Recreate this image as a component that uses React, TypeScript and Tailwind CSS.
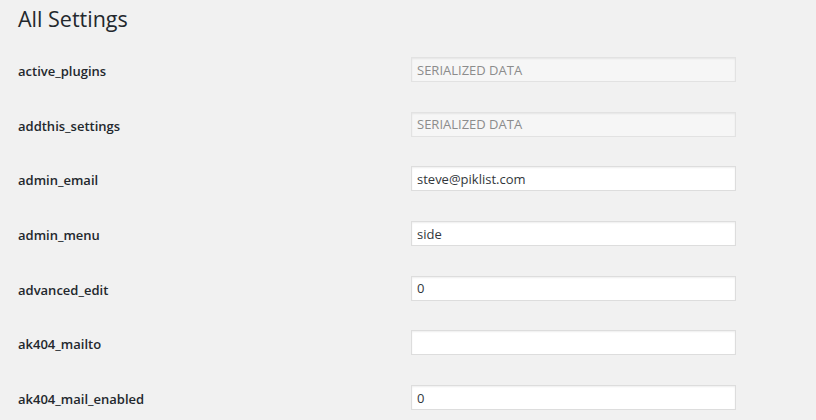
import React from "react";

const rows: { name: string; value: string; serialized?: boolean }[] = [
  { name: "active_plugins", value: "SERIALIZED DATA", serialized: true },
  { name: "addthis_settings", value: "SERIALIZED DATA", serialized: true },
  { name: "admin_email", value: "steve@piklist.com" },
  { name: "admin_menu", value: "side" },
  { name: "advanced_edit", value: "0" },
  { name: "ak404_mailto", value: "" },
  { name: "ak404_mail_enabled", value: "0" },
];

export default function App() {
  return (
    <div
      className="bg-[#f1f1f1] min-h-[420px] w-full overflow-hidden pl-[18px] text-[#23282d]"
      style={{ fontFamily: '"Open Sans", "Noto Sans", sans-serif' }}
    >
      <h1 className="text-[21.5px] leading-[28px] font-normal pt-[5px] mb-[9px]">All Settings</h1>
      <div className="flex flex-col">
        {rows.map((r) => (
          <div key={r.name} className="flex items-start h-[54.7px]">
            <div className="w-[393px] pt-[20px] text-[13px] leading-[18px] font-semibold">{r.name}</div>
            <div className="pt-[15px]">
              <input
                readOnly
                value={r.value}
                className={
                  "block w-[325px] h-[25px] px-[5px] text-[13px] leading-[18px] border outline-none shadow-[inset_0_1px_2px_rgba(0,0,0,0.07)] " +
                  (r.serialized
                    ? "bg-[#f6f6f6] border-[#e2e2e2] text-[#8c8c8c]"
                    : "bg-white border-[#dddddd] text-[#32373c]")
                }
                style={{ fontFamily: '"Open Sans", "Noto Sans", sans-serif' }}
              />
            </div>
          </div>
        ))}
      </div>
    </div>
  );
}
